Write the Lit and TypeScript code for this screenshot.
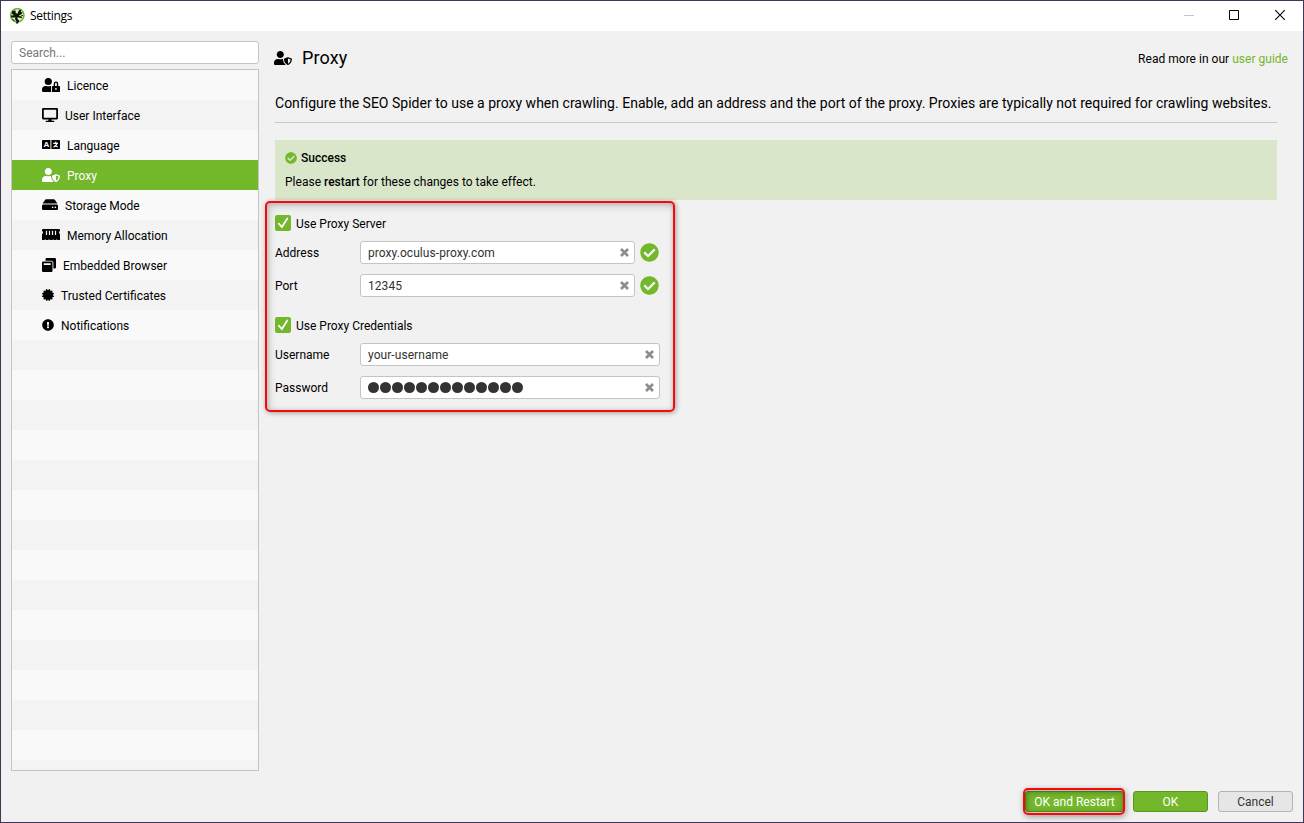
import { LitElement, html, css, svg } from "lit";
import { customElement, property } from "lit/decorators.js";
import { classMap } from "lit/directives/class-map.js";

type Icon = { w: number; d: string };

const ICONS: Record<string, Icon> = {
  userLock: { w: 640, d: "M224 256A128 128 0 1 0 96 128a128 128 0 0 0 128 128zm96 64a63.08 63.08 0 0 1 8.1-30.5c-4.8-.5-9.5-1.5-14.5-1.5h-16.7a174.08 174.08 0 0 1-145.8 0h-16.7A134.43 134.43 0 0 0 0 422.4V464a48 48 0 0 0 48 48h280.9a63.54 63.54 0 0 1-8.9-32zm288-32h-32v-80a80 80 0 0 0-160 0v80h-32a32 32 0 0 0-32 32v160a32 32 0 0 0 32 32h224a32 32 0 0 0 32-32V320a32 32 0 0 0-32-32zM496 432a32 32 0 1 1 32-32 32 32 0 0 1-32 32zm32-144h-64v-80a32 32 0 0 1 64 0z" },
  userShield: { w: 640, d: "M622.3 271.1l-115.2-45c-4.1-1.6-12.6-3.7-22.2 0l-115.2 45c-10.7 4.2-17.7 14-17.7 24.9 0 111.6 68.7 188.8 132.9 213.9 9.6 3.7 18 1.6 22.2 0C558.4 489.9 640 420.5 640 296c0-10.9-7-20.7-17.7-24.9zM496 462.4V273.3l95.5 37.3c-5.6 87.1-60.9 135.4-95.5 151.8zM224 256c70.7 0 128-57.3 128-128S294.7 0 224 0 96 57.3 96 128s57.3 128 128 128zm96 40c0-2.5.8-4.8 1.1-7.2-2.5-.1-4.9-.8-7.5-.8h-16.7c-22.2 10.2-46.9 16-72.9 16s-50.6-5.8-72.9-16h-16.7C60.2 288 0 348.2 0 422.4V464c0 26.5 21.5 48 48 48h352c6.8 0 13.3-1.5 19.2-4-54-42.9-99.2-116.7-99.2-212z" },
  desktop: { w: 576, d: "M528 0H48C21.5 0 0 21.5 0 48v320c0 26.5 21.5 48 48 48h192l-16 48h-72c-13.3 0-24 10.7-24 24s10.7 24 24 24h272c13.3 0 24-10.7 24-24s-10.7-24-24-24h-72l-16-48h192c26.5 0 48-21.5 48-48V48c0-26.5-21.5-48-48-48zm-16 352H64V64h448v288z" },
  disk: { w: 576, d: "M576 284v106c0 26.51-21.49 48-48 48H48c-26.51 0-48-21.49-48-48v-106c0-26.51 21.49-48 48-48h480c26.51 0 48 21.49 48 48zm-48-82a79.557 79.557 0 0 1 30.777 6.165L462.25 63.374A48.003 48.003 0 0 0 422.311 42H153.689a48 48 0 0 0-39.938 21.374L17.223 208.165A79.557 79.557 0 0 1 48 202h480zm-48 106c-17.673 0-32 14.327-32 32s14.327 32 32 32 32-14.327 32-32-14.327-32-32-32zm-96 0c-17.673 0-32 14.327-32 32s14.327 32 32 32 32-14.327 32-32-14.327-32-32-32z" },
  windows: { w: 512, d: "M512 48v288c0 26.5-21.5 48-48 48h-48V176c0-44.1-35.9-80-80-80H128V48c0-26.5 21.5-48 48-48h288c26.5 0 48 21.5 48 48zM384 176v288c0 26.5-21.5 48-48 48H48c-26.5 0-48-21.5-48-48V176c0-26.5 21.5-48 48-48h288c26.5 0 48 21.5 48 48zm-68 28c0-6.6-5.4-12-12-12H76c-6.6 0-12 5.4-12 12v52h252v-52z" },
  certificate: { w: 512, d: "M458.622 255.92l45.985-45.005c13.708-12.977 7.316-36.039-10.664-40.339l-62.65-15.99 17.661-62.015c4.991-17.838-11.829-34.663-29.661-29.671l-61.994 17.667-15.984-62.671C337.085.197 313.765-6.276 300.99 7.228L256 53.57 211.011 7.229c-12.63-13.351-36.047-7.234-40.325 10.668l-15.984 62.671-61.995-17.667C74.87 57.907 58.056 74.738 63.046 92.572l17.661 62.015-62.65 15.99C.069 174.878-6.31 197.944 7.392 210.915l45.985 45.005-45.985 45.004c-13.708 12.977-7.316 36.039 10.664 40.339l62.65 15.99-17.661 62.015c-4.991 17.838 11.829 34.663 29.661 29.671l61.994-17.667 15.984 62.671c4.439 18.575 27.696 24.018 40.325 10.668L256 458.61l44.989 46.001c12.5 13.488 35.987 7.486 40.325-10.668l15.984-62.671 61.994 17.667c17.836 4.994 34.651-11.837 29.661-29.671l-17.661-62.015 62.65-15.99c17.987-4.302 24.366-27.367 10.664-40.339l-45.984-45.004z" },
  exclamation: { w: 512, d: "M504 256c0 136.997-111.043 248-248 248S8 392.997 8 256C8 119.083 119.043 8 256 8s248 111.083 248 248zm-248 50c-25.405 0-46 20.595-46 46s20.595 46 46 46 46-20.595 46-46-20.595-46-46-46zm-43.673-165.346l7.418 136c.347 6.364 5.609 11.346 11.982 11.346h48.546c6.373 0 11.635-4.982 11.982-11.346l7.418-136c.375-6.874-5.098-12.654-11.982-12.654h-63.383c-6.884 0-12.356 5.78-11.981 12.654z" },
  check: { w: 512, d: "M504 256c0 136.967-111.033 248-248 248S8 392.967 8 256 119.033 8 256 8s248 111.033 248 248zM227.314 387.314l184-184c6.248-6.248 6.248-16.379 0-22.627l-22.627-22.627c-6.248-6.249-16.379-6.249-22.628 0L216 308.118l-70.059-70.059c-6.248-6.248-16.379-6.248-22.628 0l-22.627 22.627c-6.248 6.248-6.248 16.379 0 22.627l104 104c6.249 6.249 16.379 6.249 22.628.001z" },
};

@customElement("ui-icon")
class UiIcon extends LitElement {
  @property() name = "";
  @property({ type: Number }) width = 16;
  @property({ type: Number }) height = 14;

  static styles = css`
    :host { display: block; flex: none; }
    svg { display: block; fill: currentColor; }
    .letter { font: 700 8px "Liberation Sans", sans-serif; fill: #fff; }
    .cut { fill: none; stroke: #fff; stroke-width: 1.2; }
    .slots { fill: none; stroke: #f3f3f3; stroke-width: 1.2; }
  `;

  render() {
    if (this.name === "language") {
      return html`<svg width=${this.width} height=${this.height} viewBox="0 0 18 14">
        <path d="M.8 2H8.4V11H.8Q0 11 0 10.2V2.8Q0 2 .8 2zM9.4 2H17.2Q18 2 18 2.8V10.2Q18 11 17.2 11H9.4z" />
        <text class="letter" x="1.4" y="9.4">A</text>
        <path class="cut" d="M11.2 5.3H16M13.8 3.6V5.3M15.2 5.3Q14.3 8.2 11.4 9.2M13 7Q13.8 8.6 15.8 9" />
      </svg>`;
    }
    if (this.name === "memory") {
      return html`<svg width=${this.width} height=${this.height} viewBox="0 0 18 14">
        <path d="M1 1H17Q18 1 18 2V3Q17 3.3 17 4.5T18 6V12H15.2V11.2H14.4V12H11.6V11.2H10.8V12H7.4V11.2H6.6V12H3.6V11.2H2.8V12H0V6Q1 5.7 1 4.5T0 3V2Q0 1 1 1z" />
        <path class="slots" d="M4.5 2.8V7M7.5 2.8V7M10.5 2.8V7M13.5 2.8V7" />
      </svg>`;
    }
    const icon = ICONS[this.name];
    if (!icon) return null;
    return html`<svg width=${this.width} height=${this.height} viewBox="0 0 ${icon.w} 512" preserveAspectRatio="none">
      ${svg`<path d=${icon.d}></path>`}
    </svg>`;
  }
}

@customElement("check-option")
class CheckOption extends LitElement {
  @property() label = "";

  static styles = css`
    :host { display: flex; align-items: center; gap: 5px; height: 16px; }
    .box { width: 16px; height: 16px; border-radius: 2px; background: #73b72b; }
    .text { padding-top: 2px; }
    svg { display: block; }
    .tick { fill: none; stroke: #fff; stroke-width: 1.8; stroke-linecap: round; }
  `;

  render() {
    return html`
      <span class="box"><svg width="16" height="16"><path class="tick" d="M3.8 8.6L6.9 12L12.3 3.4" /></svg></span>
      <span class="text">${this.label}</span>
    `;
  }
}

@customElement("form-field")
class FormField extends LitElement {
  @property() label = "";
  @property() value = "";
  @property({ type: Number }) dots = 0;
  @property({ type: Boolean }) valid = false;

  static styles = css`
    :host { display: flex; align-items: center; height: 23px; }
    .label { width: 85px; flex: none; line-height: 17px; padding-top: 1px; }
    .input {
      box-sizing: border-box; flex: 1; height: 23px; display: flex; align-items: center;
      justify-content: space-between; padding: 0 5px 0 7px; border: 1px solid #c4c4c4;
      border-radius: 3px; background: #fff; color: #333;
    }
    .value { line-height: 17px; padding-top: 1px; letter-spacing: 0.06px; }
    .dots { display: flex; gap: 1px; }
    .dot { width: 11px; height: 11px; border-radius: 50%; background: #333; }
    .clear { display: block; stroke: #8d8d8d; stroke-width: 2.7; }
    .status { margin: -1px 0 0 5px; width: 20px; color: #73b72b; }
  `;

  render() {
    return html`
      <span class="label">${this.label}</span>
      <div class="input">
        ${this.dots
          ? html`<span class="dots">${Array.from({ length: this.dots }, () => html`<i class="dot"></i>`)}</span>`
          : html`<span class="value">${this.value}</span>`}
        <svg class="clear" width="9" height="9"><path d="M1 1L8 8M8 1L1 8" /></svg>
      </div>
      ${this.valid ? html`<ui-icon class="status" name="check" width="19" height="19"></ui-icon>` : null}
    `;
  }
}

const NAV = [
  { label: "Licence", icon: "userLock", w: 18, h: 14 },
  { label: "User Interface", icon: "desktop", w: 16, h: 14 },
  { label: "Language", icon: "language", w: 18, h: 14 },
  { label: "Proxy", icon: "userShield", w: 18, h: 14, active: true },
  { label: "Storage Mode", icon: "disk", w: 16, h: 14 },
  { label: "Memory Allocation", icon: "memory", w: 18, h: 14 },
  { label: "Embedded Browser", icon: "windows", w: 14, h: 14 },
  { label: "Trusted Certificates", icon: "certificate", w: 12, h: 12 },
  { label: "Notifications", icon: "exclamation", w: 12, h: 12 },
];

@customElement("app-root")
class AppRoot extends LitElement {
  static styles = css`
    :host {
      box-sizing: border-box; display: flex; flex-direction: column; width: 1304px; height: 823px;
      border: 1px solid #453555; background: #f1f1f1; color: #000;
      font: 12px/16px Roboto, sans-serif; overflow: hidden;
    }
    .titlebar { height: 30px; flex: none; display: flex; align-items: center; background: #fff; padding-left: 8px; }
    .title { flex: 1; margin-left: 5px; font-family: "Open Sans", "Noto Sans", sans-serif; font-size: 12px; letter-spacing: -0.3px; }
    .controls { display: flex; width: 138px; }
    .controls svg { width: 46px; height: 30px; display: block; fill: none; stroke: #000; }
    .controls .min { stroke: #c8c8c8; }
    .body { flex: 1; display: flex; min-height: 0; }
    .side { box-sizing: border-box; width: 258px; padding: 10px 0 0 10px; display: flex; flex-direction: column; gap: 5px; flex: none; }
    .search { box-sizing: border-box; height: 23px; border: 1px solid #c4c4c4; border-radius: 3px; background: #fff; color: #777; line-height: 22px; padding-left: 7px; }
    .list { height: 700px; border: 1px solid #c4c4c4; background: repeating-linear-gradient(#f9f9f9 0 30px, #f3f3f3 30px 60px); }
    .item { height: 30px; display: flex; align-items: center; gap: 7px; padding: 0 0 0 30px; }
    .item .text { padding-top: 2px; }
    .item.active { background: #73b72b; color: #fff; }
    .main { flex: 1; padding: 17px 15px 0 16px; }
    .head { display: flex; align-items: center; height: 20px; margin-left: -1px; }
    .heading { flex: 1; margin: 0 0 0 10px; font-size: 18px; line-height: 20px; font-weight: 400; letter-spacing: 0.1px; }
    .more { padding-top: 2px; letter-spacing: 0.02px; }
    .link { color: #73b72b; }
    .intro { font-size: 14px; line-height: 20px; letter-spacing: 0.014px; margin: 25px 11px 0 0; height: 29px; border-bottom: 1px solid #c8c8c8; white-space: nowrap; }
    .notice { box-sizing: border-box; height: 60px; margin: 17px 11px 0 0; padding: 10px; background: #d9e6ca; }
    .notice .top { display: flex; align-items: center; gap: 4px; font-weight: 500; height: 16px; }
    .notice .top ui-icon { color: #73b72b; }
    .notice p { margin: 8px 0 0; letter-spacing: 0.015px; }
    b { font-weight: 500; }
    .form { position: relative; width: 385px; padding-top: 15px; display: flex; flex-direction: column; gap: 20px; }
    .group { display: flex; flex-direction: column; gap: 10px; }
    .mark { position: absolute; pointer-events: none; box-sizing: border-box; border: 2px solid #f8080b; border-radius: 5px; }
    .form .mark { left: -10px; top: 1px; width: 410px; height: 211px; box-shadow: 1px 1px 5px rgba(0,0,0,.35), inset 2px 3px 7px rgba(0,0,0,.2), inset 0 0 5px rgba(0,0,0,.12); }
    .footer { height: 31px; flex: none; display: flex; justify-content: flex-end; gap: 10px; padding-right: 10px; }
    .btn { position: relative; box-sizing: border-box; width: 75px; height: 21px; border: 1px solid #b4b4b4; border-radius: 3px; background: #e6e6e6; color: #333; text-align: center; line-height: 20px; }
    .btn.primary { background: #73b72b; border-color: #5c9322; color: #fff; }
    .btn.wide { width: 99px; margin-right: -1px; }
    .btn .mark { left: -3px; top: -4px; width: 102px; height: 27px; box-shadow: 1px 2px 6px rgba(0,0,0,.35), inset 1px 1px 6px rgba(0,0,0,.4); }
  `;

  render() {
    return html`
      <div class="titlebar">
        <svg width="16" height="16" viewBox="0 0 16 16">
          <circle cx="8.3" cy="7.3" r="6.7" fill="#dff0c8" stroke="#6db52b" stroke-width="1.5" />
          <path d="M3.2 3.2L6.4 2.2L6.8 5.2L8.6 5.6L10 2L12.2 1.8L11.8 4L13.8 4.4L12 6.6L9.8 7.6L13.4 9L12.6 10.2L8.8 9.2L8.4 10.8L10.2 12.6L9 15.4H6.8L7.6 13.4L6 11.2L6.4 9.4L2.4 9.6L1.8 7.6L5 7.2L2.6 5.4Z" fill="#10150c" />
          <path d="M12.2 7.2L14 7.8M3.4 11.2L5.6 12.8" stroke="#10150c" />
        </svg>
        <span class="title">Settings</span>
        <div class="controls">
          <svg class="min"><path d="M19 14.5h10" /></svg>
          <svg><path d="M18.5 9.5h9v9h-9z" /></svg>
          <svg><path d="M18.2 9.2L27.8 18.8M27.8 9.2L18.2 18.8" stroke-width="1.1" /></svg>
        </div>
      </div>
      <div class="body">
        <div class="side">
          <div class="search">Search...</div>
          <div class="list">
            ${NAV.map((n) => html`
              <div class=${classMap({ item: true, active: !!n.active })}>
                <ui-icon name=${n.icon} width=${n.w} height=${n.h}></ui-icon><span class="text">${n.label}</span>
              </div>`)}
          </div>
        </div>
        <div class="main">
          <div class="head">
            <ui-icon name="userShield" width="18" height="14"></ui-icon>
            <h1 class="heading">Proxy</h1>
            <span class="more">Read more in our <span class="link">user guide</span></span>
          </div>
          <div class="intro">Configure the SEO Spider to use a proxy when crawling. Enable, add an address and the port of the proxy. Proxies are typically not required for crawling websites.</div>
          <div class="notice">
            <div class="top"><ui-icon name="check" width="12" height="12"></ui-icon>Success</div>
            <p>Please <b>restart</b> for these changes to take effect.</p>
          </div>
          <div class="form">
            <div class="group">
              <check-option label="Use Proxy Server"></check-option>
              <form-field label="Address" value="proxy.oculus-proxy.com" valid></form-field>
              <form-field label="Port" value="12345" valid></form-field>
            </div>
            <div class="group">
              <check-option label="Use Proxy Credentials"></check-option>
              <form-field label="Username" value="your-username"></form-field>
              <form-field label="Password" dots="13"></form-field>
            </div>
            <div class="mark"></div>
          </div>
        </div>
      </div>
      <div class="footer">
        <div class="btn primary wide">OK and Restart<div class="mark"></div></div>
        <div class="btn primary">OK</div>
        <div class="btn">Cancel</div>
      </div>
    `;
  }
}
